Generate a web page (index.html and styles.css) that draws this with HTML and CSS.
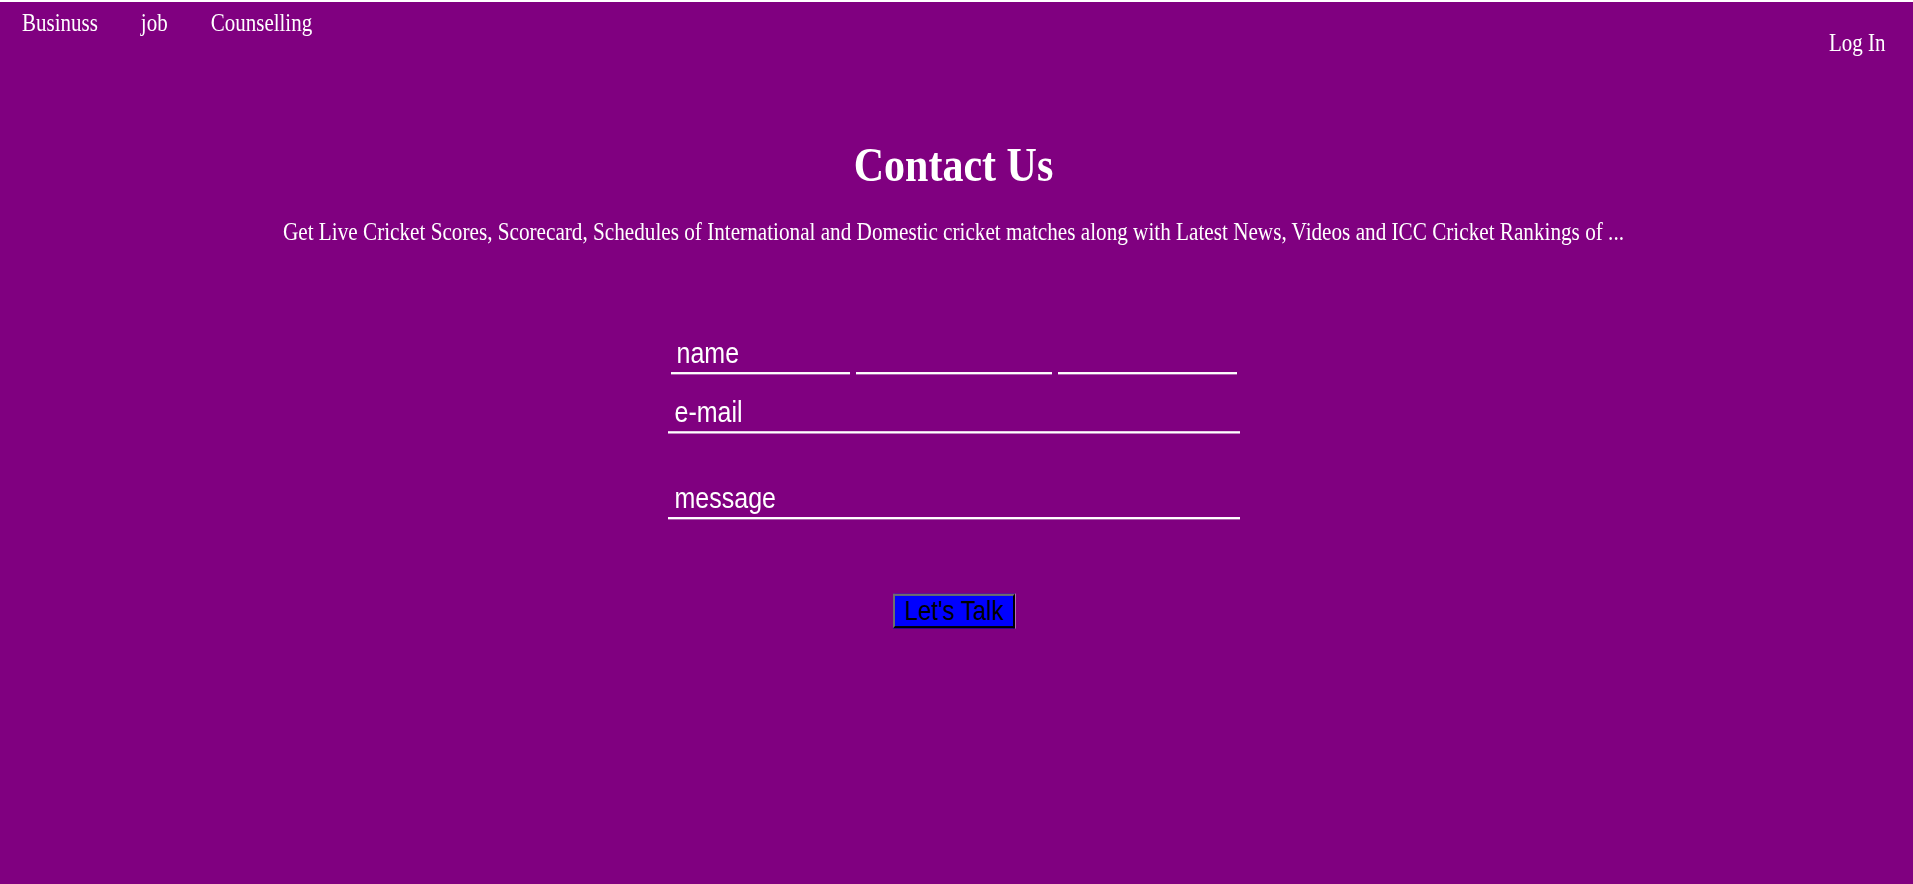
FILE: index.html
```html
<!DOCTYPE html>
<html lang="en">
<head>
<meta charset="utf-8">
<title>Contact Us</title>
<link rel="stylesheet" href="styles.css">
</head>
<body>
<div class="page">
  <header class="header">
    <nav class="nav">
      <a class="nav-link" href="#">Businuss</a>
      <a class="nav-link" href="#">job</a>
      <a class="nav-link" href="#">Counselling</a>
    </nav>
    <a class="login" href="#">Log In</a>
  </header>
  <main class="main">
    <h1 class="title">Contact Us</h1>
    <p class="lead">Get Live Cricket Scores, Scorecard, Schedules of International and Domestic cricket matches along with Latest News, Videos and ICC Cricket Rankings of ...</p>
    <form class="form">
      <div class="name-row">
        <input class="field field-first" type="text" placeholder="name">
        <input class="field field-middle" type="text">
        <input class="field field-last" type="text">
      </div>
      <input class="field field-wide field-email" type="text" placeholder="e-mail">
      <input class="field field-wide field-message" type="text" placeholder="message">
    </form>
    <div class="actions">
      <button class="talk" type="button">Let's Talk</button>
    </div>
  </main>
</div>
</body>
</html>
```

FILE: styles.css
```css
html {
  background: #800080;
}

body {
  margin: 0;
  min-height: 100vh;
  box-sizing: border-box;
  border-top: 2px solid #ffffff;
  color: #ffffff;
  font-family: "Liberation Serif", "Times New Roman", serif;
}

.page {
  min-height: 760px;
  transform: scaleY(1.16);
  transform-origin: 0 0;
}

.header {
  display: flex;
  justify-content: space-between;
  align-items: flex-start;
  padding: 6px 27.5px 0 22px;
}

.nav {
  display: flex;
  gap: 43px;
}

.nav-link,
.login {
  color: #ffffff;
  text-decoration: none;
  font-size: 21px;
  line-height: 24px;
}

.login {
  margin-top: 16.5px;
}

.main {
  padding-right: 6px;
  text-align: center;
}

.title {
  margin: 69px 0 0;
  font-size: 42px;
  line-height: 48px;
  font-weight: bold;
}

.lead {
  margin: 22px 0 0;
  font-size: 21.2px;
  line-height: 24px;
}

.form {
  width: 572px;
  margin: 77px auto 0;
  text-align: left;
}

.name-row {
  display: flex;
  gap: 6px;
  padding: 0 3px;
}

.field {
  display: block;
  box-sizing: border-box;
  height: 34px;
  margin: 0;
  padding: 2px 0 2px 6px;
  border: 0;
  border-bottom: 2px solid #ffffff;
  border-radius: 0;
  background: transparent;
  color: #ffffff;
  font-family: "Liberation Sans", Arial, sans-serif;
  font-size: 25px;
  outline: none;
}

.field::placeholder {
  color: #ffffff;
  opacity: 1;
}

.field-first,
.field-last {
  width: 179px;
}

.field-middle {
  width: 196px;
}

.field-wide {
  width: 572px;
  padding-left: 7px;
}

.field-email {
  margin-top: 17px;
}

.field-message {
  margin-top: 40px;
}

.actions {
  margin-top: 64.5px;
  text-align: center;
}

.talk {
  display: inline-block;
  box-sizing: border-box;
  width: 122px;
  height: 30px;
  margin: 0 0 0 1px;
  padding: 0;
  border: 2px solid;
  border-color: #6e6e6e #000000 #000000 #6e6e6e;
  border-radius: 0;
  background: #0000ff;
  color: #000000;
  font-family: "Liberation Sans", Arial, sans-serif;
  font-size: 24px;
  line-height: 26px;
  text-align: center;
  cursor: pointer;
}
```
